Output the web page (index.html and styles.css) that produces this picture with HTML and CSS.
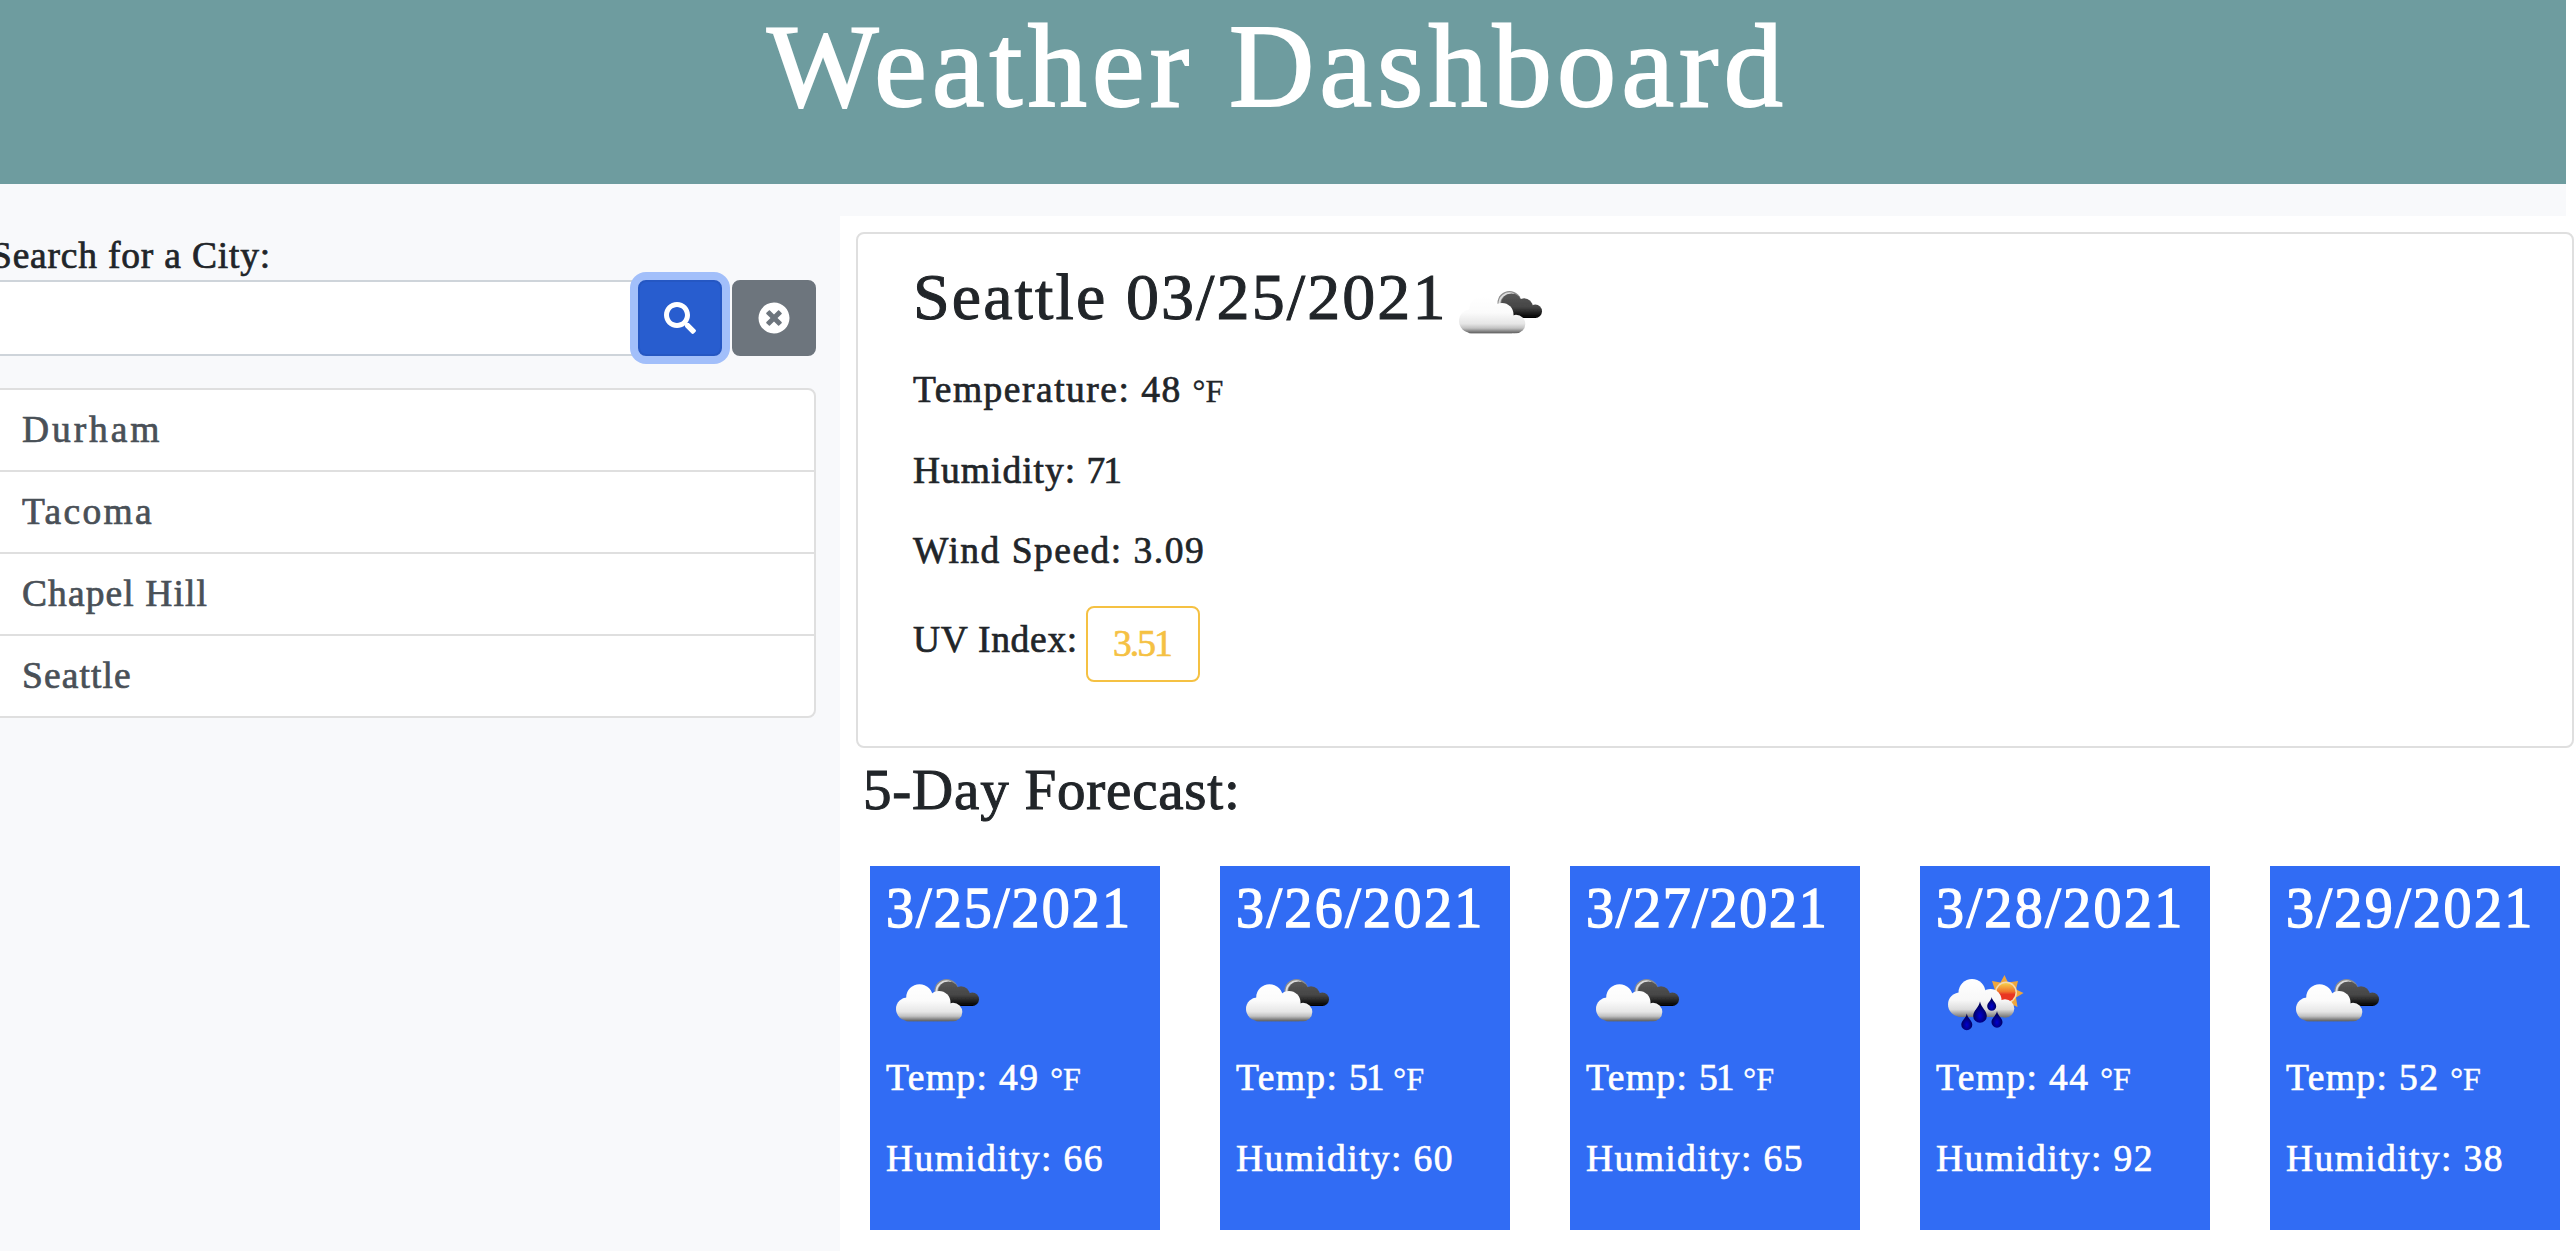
FILE: index.html
```html
<!DOCTYPE html>
<html lang="en">
<head>
<meta charset="utf-8">
<title>Weather Dashboard</title>
<link rel="stylesheet" href="styles.css">
</head>
<body>
<svg class="defs" width="0" height="0" aria-hidden="true">
  <defs>
    <linearGradient id="white-cloud" gradientUnits="userSpaceOnUse" x1="0" y1="34" x2="0" y2="71">
      <stop offset="0" stop-color="#fff"/><stop offset=".45" stop-color="#fbfbfb"/><stop offset=".75" stop-color="#e6e6e6"/><stop offset=".87" stop-color="#c2c2c2"/><stop offset="1" stop-color="#626262"/>
    </linearGradient>
    <linearGradient id="dark-cloud" gradientUnits="userSpaceOnUse" x1="0" y1="29" x2="0" y2="56">
      <stop offset="0" stop-color="#5c5c5c"/><stop offset=".6" stop-color="#454545"/><stop offset="1" stop-color="#000"/>
    </linearGradient>
    <linearGradient id="rain-cloud" gradientUnits="userSpaceOnUse" x1="0" y1="29" x2="0" y2="67">
      <stop offset="0" stop-color="#fff"/><stop offset=".55" stop-color="#f8f8f8"/><stop offset=".8" stop-color="#dcdcdc"/><stop offset="1" stop-color="#777"/>
    </linearGradient>
    <linearGradient id="sun" x1="0" y1="0" x2="0" y2="1">
      <stop offset="0" stop-color="#f7d04a"/><stop offset=".45" stop-color="#f0742c"/><stop offset=".6" stop-color="#e93423"/><stop offset="1" stop-color="#e93423"/>
    </linearGradient>
    <radialGradient id="drop" cx=".5" cy=".68" r=".5">
      <stop offset="0" stop-color="#0000d2"/><stop offset="1" stop-color="#00005c"/>
    </radialGradient>
    <filter id="soft"><feGaussianBlur stdDeviation=".6"/></filter>
    <symbol id="clouds" viewBox="0 0 100 100">
      <g filter="url(#soft)">
        <circle cx="60.5" cy="41" r="12" fill="#8d8d8d"/>
        <path d="M50.5 43a10.3 10.3 0 0 1 14-11" fill="none" stroke="#dedede" stroke-width="1.8"/>
        <g fill="url(#dark-cloud)">
          <circle cx="62.5" cy="42" r="10.5"/><circle cx="75" cy="45" r="8.8"/><circle cx="86.3" cy="49.3" r="6.7"/>
          <rect x="62" y="46" width="25" height="10"/>
        </g>
        <g fill="url(#white-cloud)">
          <circle cx="33.5" cy="47.5" r="13.3"/><circle cx="21.5" cy="59" r="11.5"/><circle cx="53" cy="52.500" r="11.5"/><circle cx="67" cy="62" r="9.3"/>
          <rect x="20" y="52" width="43" height="19.2"/><rect x="18" y="61" width="51" height="10.2" rx="4"/>
        </g>
      </g>
    </symbol>
    <symbol id="sun-rain" viewBox="0 0 100 100">
      <g filter="url(#soft)">
        <path d="M68.500 25l3.500 7.500 10-1.500-2 8.500 7.500 3.500-7.500 4.500 1.500 9.500-20-9-5.500-17 8.500 1.500z" fill="#efa63c"/>
        <circle cx="70" cy="42.500" r="11" fill="#f3d9b0"/><circle cx="70" cy="42.500" r="9.5" fill="url(#sun)"/>
        <g fill="url(#rain-cloud)">
          <circle cx="36" cy="42.5" r="13.5"/><circle cx="24" cy="54.5" r="12"/><circle cx="54.5" cy="50" r="11"/><circle cx="69" cy="58.5" r="9.3"/>
          <rect x="24" y="48" width="40" height="19"/><rect x="20" y="58" width="52" height="9" rx="4"/>
        </g>
        <g fill="url(#drop)">
          <path d="M44 51.5c1 6 6.8 9 6.8 14.5a6.8 6.8 0 0 1-13.6 0c0-5.5 5.8-8.5 6.8-14.5z"/>
          <path d="M55.7 47c.6 4 4.5 5.5 4.5 9.3a4.5 4.5 0 0 1-9 0c0-3.800 3.900-5.300 4.500-9.300z"/>
          <path d="M61 61c.8 5 5.500 6.800 5.500 11.200a5.500 5.500 0 0 1-11 0c0-4.400 4.700-6.200 5.500-11.200z"/>
          <path d="M30.800 63.500c.8 5 5.500 6.800 5.500 11.200a5.500 5.500 0 0 1-11 0c0-4.400 4.700-6.200 5.500-11.200z"/>
        </g>
      </g>
    </symbol>
  </defs>
</svg>

<header class="banner"><h1>Weather Dashboard</h1></header>

<div class="layout">
  <aside class="sidebar">
    <label class="search-label" for="city">Search for a City:</label>
    <div class="search-row">
      <input id="city" class="search-input" type="text">
      <button class="btn btn-search" type="button" aria-label="Search">
        <svg viewBox="0 0 512 512"><path d="M505 442.700L405.300 343c-4.500-4.500-10.600-7-17-7H372c27.600-35.300 44-79.700 44-128C416 93.100 322.900 0 208 0S0 93.100 0 208s93.100 208 208 208c48.300 0 92.700-16.400 128-44v16.300c0 6.400 2.500 12.500 7 17l99.700 99.700c9.400 9.400 24.600 9.400 33.900 0l28.300-28.300c9.400-9.400 9.400-24.600.1-34zM208 336c-70.700 0-128-57.200-128-128 0-70.700 57.200-128 128-128 70.700 0 128 57.200 128 128 0 70.700-57.200 128-128 128z"/></svg>
      </button>
      <button class="btn btn-clear" type="button" aria-label="Clear">
        <svg viewBox="0 0 512 512"><path d="M256 8C119 8 8 119 8 256s111 248 248 248 248-111 248-248S393 8 256 8zm121.600 313.100c4.700 4.700 4.700 12.300 0 17L338 377.600c-4.700 4.700-12.300 4.700-17 0L256 312l-65.100 65.600c-4.700 4.700-12.300 4.700-17 0L134.400 338c-4.700-4.700-4.700-12.300 0-17l65.600-65-65.600-65.100c-4.700-4.700-4.700-12.300 0-17l39.600-39.600c4.700-4.700 12.300-4.700 17 0l65 65.700 65.100-65.600c4.700-4.700 12.300-4.700 17 0l39.600 39.600c4.700 4.700 4.700 12.300 0 17L312 256l65.600 65.100z"/></svg>
      </button>
    </div>
    <ul class="history">
      <li class="ls-xl">Durham</li>
      <li class="ls-l">Tacoma</li>
      <li class="ls-s">Chapel Hill</li>
      <li class="ls-s">Seattle</li>
    </ul>
  </aside>

  <main class="content">
    <section class="current">
      <div class="current-title"><h2>Seattle 03/25/2021</h2><svg class="icon"><use href="#clouds"/></svg></div>
      <p class="ls-m">Temperature: 48 <span class="unit">°F</span></p>
      <p class="ls-ms">Humidity: <span class="tight">71</span></p>
      <p class="ls-m">Wind Speed: 3.09</p>
      <div class="uv"><span class="uv-label">UV Index:</span><span class="uv-value">3.51</span></div>
    </section>
    <h3 class="forecast-title">5-Day Forecast:</h3>
    <section class="forecast">
      <article class="day"><h4>3/25/2021</h4><svg class="icon"><use href="#clouds"/></svg><p>Temp: 49 <span class="unit">°F</span></p><p>Humidity: 66</p></article>
      <article class="day"><h4 class="wide">3/26/2021</h4><svg class="icon"><use href="#clouds"/></svg><p>Temp: <span class="tight">51</span> <span class="unit">°F</span></p><p>Humidity: 60</p></article>
      <article class="day"><h4 class="narrow">3/27/2021</h4><svg class="icon"><use href="#clouds"/></svg><p>Temp: <span class="tight">51</span> <span class="unit">°F</span></p><p>Humidity: 65</p></article>
      <article class="day"><h4 class="wide">3/28/2021</h4><svg class="icon"><use href="#sun-rain"/></svg><p>Temp: 44 <span class="unit">°F</span></p><p>Humidity: 92</p></article>
      <article class="day"><h4 class="wide">3/29/2021</h4><svg class="icon"><use href="#clouds"/></svg><p>Temp: 52 <span class="unit">°F</span></p><p>Humidity: 38</p></article>
    </section>
  </main>
</div>
</body>
</html>
```
FILE: styles.css
```css
* { box-sizing: border-box; }

body {
  margin: 0;
  height: 1252px;
  overflow: hidden;
  background: #fff;
  color: #212529;
  font-family: "Liberation Serif", "Times New Roman", serif;
  font-size: 37.5px;
  -webkit-text-stroke: 0.7px currentColor;
}

h1, h2, h3, h4, p, ul { margin: 0; padding: 0; font-weight: 400; white-space: nowrap; }

.defs { display: block; height: 0; }

.banner {
  width: 2566px;
  height: 184px;
  padding: 7px 11px 0 0;
  background: #6e9c9f;
  color: #fff;
  text-align: center;
}
.banner h1 { font-size: 118px; line-height: 120px; letter-spacing: 5.3px; -webkit-text-stroke-width: 2px; }

.layout {
  display: grid;
  grid-template-columns: 840px 1736px;
  width: 2566px;
  height: 1067px;
  background: #f8f9fb;
}

.sidebar { padding: 48px 24px 0 0; }
.search-label {
  display: block;
  margin: 0 0 0 -9px;
  line-height: 48px;
  letter-spacing: 0.8px;
  white-space: nowrap;
}
.search-row { display: flex; height: 76px; }
.search-input {
  flex: 1;
  min-width: 0;
  margin-left: -10px;
  margin-right: -2px;
  border: 2px solid #ced4da;
  background: #fff;
}
.btn {
  display: flex;
  align-items: center;
  justify-content: center;
  width: 84px;
  padding: 0;
  border: 2px solid;
  border-radius: 8px;
}
.btn svg { width: 32px; height: 32px; fill: #fff; }
.btn-search { z-index: 1; background: #285dcf; border-color: #2557c3; box-shadow: 0 0 0 8px #a2bffa; }
.btn-clear { margin-left: 10px; background: #6d757d; border-color: #6d757d; }

.history {
  margin: 32px 0 0 -10px;
  border: 2px solid #dfdfdf;
  border-radius: 8px;
  background: #fff;
  color: #495057;
  list-style: none;
}
.history li { padding-left: 30px; height: 82px; line-height: 80px; border-bottom: 2px solid #dfdfdf; }
.history li:last-child { height: 80px; border-bottom: 0; }

.ls-s { letter-spacing: 1.1px; }
.ls-ms { letter-spacing: 1px; }
.ls-m { letter-spacing: 1.5px; }
.ls-l { letter-spacing: 2.3px; }
.ls-xl { letter-spacing: 2.9px; }
.tight { letter-spacing: -2px; }
.unit { font-size: 32px; letter-spacing: 0; -webkit-text-stroke-width: 0.4px; }

.content { margin-top: 32px; padding: 16px 2px 0 16px; background: #fff; }
.current {
  height: 516px;
  padding: 23px 0 0 55px;
  border: 2px solid #dfdfdf;
  border-radius: 8px;
}
.current-title { display: flex; height: 80px; margin-bottom: 13px; }
.current-title h2 { width: 536px; font-size: 66px; line-height: 80px; letter-spacing: 2.1px; -webkit-text-stroke-width: 1px; }
.current-title .icon { margin-top: 5px; }
.current p { line-height: 80px; }
.icon { display: block; flex: none; width: 100px; height: 100px; }

.uv { display: flex; height: 76px; margin-top: 15px; }
.uv-label { width: 173px; line-height: 68px; letter-spacing: 0.7px; white-space: nowrap; }
.uv-value {
  width: 114px;
  padding-left: 25px;
  border: 2px solid #f5c143;
  border-radius: 8px;
  color: #f5c143;
  line-height: 72px;
  letter-spacing: -2px;
}

.forecast-title { margin: 8px 0 42px 7px; font-size: 57px; line-height: 68px; letter-spacing: 0.8px; -webkit-text-stroke-width: 1px; }
.forecast { display: flex; gap: 60px; margin-left: 14px; }
.day {
  flex: none;
  width: 290px;
  height: 364px;
  padding: 9px 0 0 16px;
  background: #316cf4;
  color: #fff;
  letter-spacing: 1.4px;
}
.day h4 { font-size: 56px; line-height: 67px; letter-spacing: 2.1px; -webkit-text-stroke-width: 1.3px; }
.day h4.wide { letter-spacing: 2.4px; }
.day h4.narrow { letter-spacing: 1.7px; }
.day .icon { margin: 8px 0 4px; }
.day p { line-height: 48px; margin-bottom: 32px; }
```
